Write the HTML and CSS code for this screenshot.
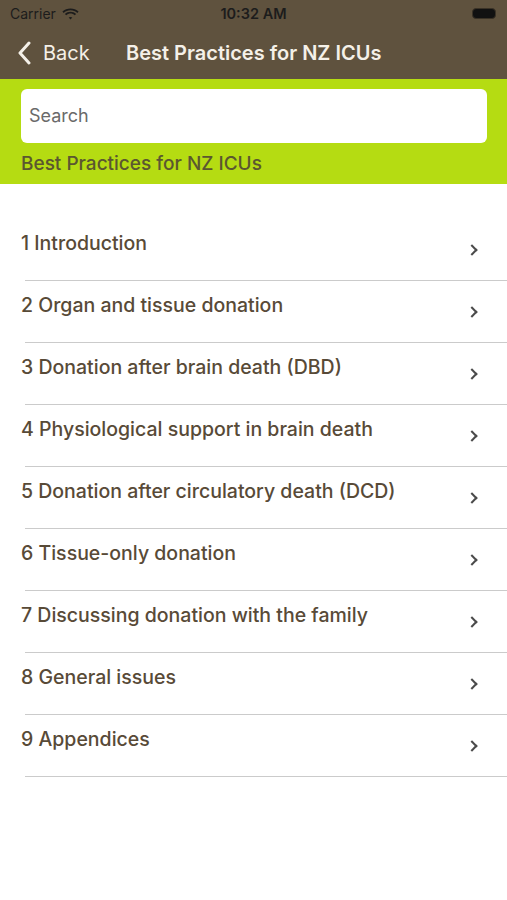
FILE: index.html
```html
<!DOCTYPE html>
<html lang="en">
  <head>
    <meta charset="UTF-8" />
    <meta name="viewport" content="width=device-width, initial-scale=1.0" />
    <title>Best Practices for NZ ICUs</title>
    <link rel="stylesheet" href="styles.css">
  </head>
  <body>
    <div class="status-bar">
      <div class="carrier">
        <span>Carrier</span>
        <svg class="wifi" width="17" height="12" viewBox="0 0 17 12">
          <path d="M8.5 2.2c2.6 0 5 1 6.8 2.7l1.3-1.3C14.4 1.5 11.6.4 8.5.4S2.6 1.5.4 3.6l1.3 1.3C3.5 3.2 5.9 2.2 8.5 2.2z" fill="#1c1c1c"/>
          <path d="M8.5 5.6c1.6 0 3.1.6 4.3 1.7l1.3-1.3c-1.5-1.4-3.5-2.2-5.6-2.2s-4.1.8-5.6 2.2l1.3 1.3c1.2-1.1 2.7-1.7 4.3-1.7z" fill="#1c1c1c"/>
          <path d="M8.5 8.9c.7 0 1.3.3 1.8.7l-1.8 1.9-1.8-1.9c.5-.4 1.1-.7 1.8-.7z" fill="#1c1c1c"/>
        </svg>
      </div>
      <div class="time">10:32 AM</div>
      <div class="battery"><span class="battery-level"></span></div>
    </div>

    <nav class="navbar">
      <a class="back" href="#">
        <svg width="14" height="24" viewBox="0 0 14 24">
          <path d="M12 2L3 12l9 10" fill="none" stroke="#f4f0e8" stroke-width="3" stroke-linecap="round" stroke-linejoin="round"/>
        </svg>
        <span>Back</span>
      </a>
      <div class="nav-title">Best Practices for NZ ICUs</div>
    </nav>

    <div class="search-area">
      <div class="search-box">Search</div>
      <div class="subtitle">Best Practices for NZ ICUs</div>
    </div>

    <ul class="chapters">
      <li><span>1 Introduction</span><i class="chevron"></i></li>
      <li><span>2 Organ and tissue donation</span><i class="chevron"></i></li>
      <li><span>3 Donation after brain death (DBD)</span><i class="chevron"></i></li>
      <li><span>4 Physiological support in brain death</span><i class="chevron"></i></li>
      <li><span>5 Donation after circulatory death (DCD)</span><i class="chevron"></i></li>
      <li><span>6 Tissue-only donation</span><i class="chevron"></i></li>
      <li><span>7 Discussing donation with the family</span><i class="chevron"></i></li>
      <li><span>8 General issues</span><i class="chevron"></i></li>
      <li><span>9 Appendices</span><i class="chevron"></i></li>
    </ul>
  </body>
</html>
```

FILE: styles.css
```css
body {
  font-family: Inter, "Liberation Sans", Arial, sans-serif;
  background-color: white;
  margin: 0;
  padding: 0;
  width: 507px;
}

.status-bar {
  display: flex;
  justify-content: space-between;
  align-items: center;
  height: 27px;
  padding: 0 10px;
  background: #5f523e;
  color: #1c1c1c;
  font-size: 14px;
}

.status-bar .carrier {
  display: flex;
  align-items: center;
  gap: 6px;
  width: 120px;
}

.status-bar .time {
  font-weight: 600;
  font-size: 14.5px;
}

.status-bar .battery {
  width: 120px;
  display: flex;
  justify-content: flex-end;
}

.battery-level {
  display: block;
  width: 22px;
  height: 9px;
  background: #111;
  border: 1.5px solid #3a3226;
  border-radius: 4px;
  margin-right: 1px;
}

.navbar {
  display: flex;
  align-items: center;
  height: 52px;
  background: #5f523e;
  color: #f4f0e8;
}

.navbar .back {
  display: flex;
  align-items: center;
  gap: 12px;
  padding-left: 17px;
  width: 92px;
  color: #f4f0e8;
  text-decoration: none;
  font-size: 20px;
}

.navbar .nav-title {
  margin-left: 17px;
  font-size: 20px;
  font-weight: 600;
}

.search-area {
  background: #b5dc12;
  padding: 10px 20px 0 21px;
  height: 95px;
}

.search-box {
  height: 54px;
  line-height: 54px;
  background: white;
  border-radius: 6px;
  padding-left: 8px;
  color: #6a6a6a;
  font-size: 18px;
}

.subtitle {
  margin-top: 9px;
  color: #5b5730;
  font-size: 19px;
  font-weight: 500;
}

.chapters {
  list-style: none;
  margin: 35px 0 0 0;
  padding: 0;
}

.chapters li {
  display: flex;
  justify-content: space-between;
  height: 61px;
  margin-left: 25px;
  border-bottom: 1px solid #cbcbcb;
}

.chapters li span {
  margin-left: -4px;
  padding-top: 12px;
  line-height: 24px;
  font-size: 19.5px;
  font-weight: 500;
  color: #584a37;
}

.chevron {
  align-self: center;
  width: 6px;
  height: 6px;
  margin-right: 31px;
  margin-top: 1px;
  border-top: 2px solid #4a4a4a;
  border-right: 2px solid #4a4a4a;
  transform: rotate(45deg);
}
```
